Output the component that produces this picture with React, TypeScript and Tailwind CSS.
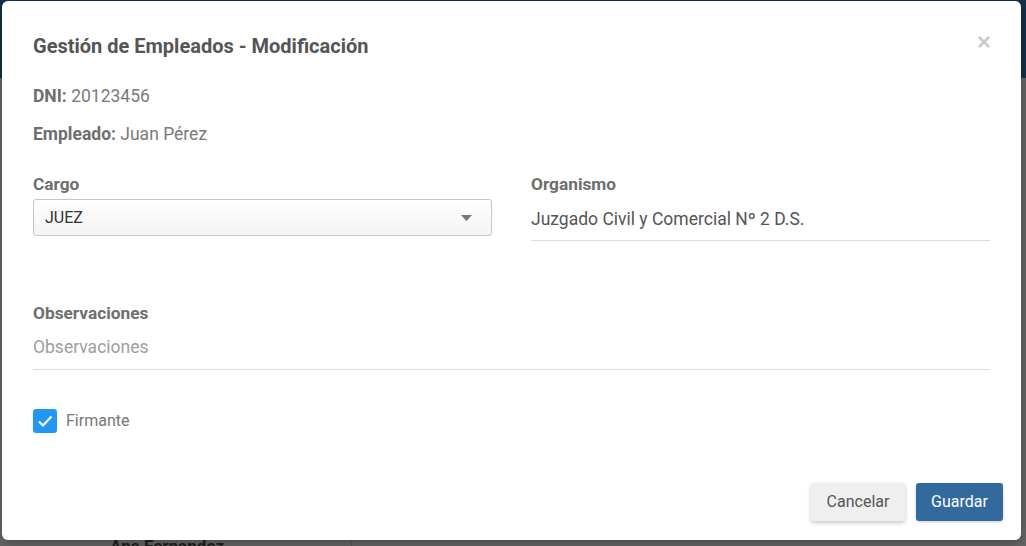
import React from "react";

const font = { fontFamily: "Roboto, 'Noto Sans', Arial, sans-serif" };

function CloseIcon() {
  return (
    <svg width="12" height="12" viewBox="0 0 12 12" aria-hidden="true">
      <path d="M1 1 L11 11 M11 1 L1 11" stroke="#c9c9c9" strokeWidth="2.6" strokeLinecap="butt" />
    </svg>
  );
}

function Caret() {
  return (
    <svg width="11" height="6" viewBox="0 0 11 6" aria-hidden="true">
      <path d="M0 0 L11 0 L5.5 6 Z" fill="#777777" />
    </svg>
  );
}

function Checkbox({ checked }: { checked: boolean }) {
  return (
    <span
      className={`flex h-[24px] w-[24px] items-center justify-center rounded-[3px] ${
        checked ? "bg-[#2196f3]" : "border-2 border-[#999]"
      }`}
    >
      {checked ? (
        <svg width="18" height="18" viewBox="0 0 18 18" aria-hidden="true">
          <path d="M3 9.5 L7 13.5 L15.5 4.5" fill="none" stroke="#ffffff" strokeWidth="2.2" />
        </svg>
      ) : null}
    </span>
  );
}

function InfoRow({ label, value, className = "" }: { label: string; value: string; className?: string }) {
  return (
    <p className={`text-[17.5px] leading-[24px] text-[#7a7a7a] ${className}`}>
      <span className="font-bold text-[#6e6e6e]">{label}</span> {value}
    </p>
  );
}

function FieldLabel({ children }: { children: React.ReactNode }) {
  return <label className="block text-[17.3px] font-bold leading-[24px] text-[#6e6e6e]">{children}</label>;
}

export default function App() {
  return (
    <div className="relative h-[546px] w-[1026px] overflow-hidden bg-[#676767]" style={font}>
      {/* page behind the backdrop */}
      <div className="flex h-full flex-col">
        <div className="h-[78px] bg-[#15304a]" />
        <div className="flex flex-1 flex-col justify-end">
          <div className="flex h-[8px] items-start">
            <span className="w-[352px] border-r border-[#5a5a5a] pl-[110px] text-[17px] font-bold leading-[16px] text-[#222]">
              Ana Fernandez
            </span>
          </div>
        </div>
      </div>

      {/* modal */}
      <div className="absolute left-[2px] top-[1px] flex h-[539px] w-[1019px] flex-col rounded-[6px] bg-white shadow-[0_4px_16px_rgba(0,0,0,0.3)]">
        <div className="px-[31px] pt-[33px]">
          <div className="flex items-start justify-between">
            <h2 className="text-[20px] font-bold leading-[24px] text-[#555]">Gestión de Empleados - Modificación</h2>
            <button className="mt-[2px] flex h-[12px] w-[12px] items-center justify-center" aria-label="Cerrar">
              <CloseIcon />
            </button>
          </div>

          <InfoRow label="DNI:" value="20123456" className="mt-[26px]" />
          <InfoRow label="Empleado:" value="Juan Pérez" className="mt-[14px]" />

          <div className="mt-[26px] grid grid-cols-2 gap-x-[39px]">
            <div>
              <FieldLabel>Cargo</FieldLabel>
              <div className="mt-[3px] flex h-[37px] items-center justify-between rounded-[3px] border border-[#c6c6c6] bg-gradient-to-b from-white to-[#f3f3f3] pl-[11px] pr-[19px]">
                <span className="text-[16px] text-[#333]">JUEZ</span>
                <Caret />
              </div>
            </div>
            <div>
              <FieldLabel>Organismo</FieldLabel>
              <div className="mt-[11px] border-b border-[#dcdcdc] pb-[9px] text-[17.5px] leading-[24px] text-[#555]">
                Juzgado Civil y Comercial Nº 2 D.S.
              </div>
            </div>
          </div>

          <div className="mt-[60px]">
            <FieldLabel>Observaciones</FieldLabel>
            <div className="mt-[10px] border-b border-[#dcdcdc] pb-[10px] text-[17.5px] leading-[24px] text-[#9e9e9e]">
              Observaciones
            </div>
          </div>

          <div className="mt-[39px] flex items-center gap-[9px]">
            <Checkbox checked />
            <span className="text-[16px] leading-[24px] text-[#777]">Firmante</span>
          </div>
        </div>

        <div className="mt-auto flex justify-end gap-[11px] pb-[19px] pr-[18px]">
          <button className="h-[38px] w-[94px] rounded-[3px] bg-[#efefef] text-[16px] text-[#555] shadow-[0_2px_4px_rgba(0,0,0,0.22)]">
            Cancelar
          </button>
          <button className="h-[38px] w-[87px] rounded-[3px] bg-[#336a9d] text-[16px] text-white shadow-[0_1px_3px_rgba(0,0,0,0.2)]">
            Guardar
          </button>
        </div>
      </div>
    </div>
  );
}
